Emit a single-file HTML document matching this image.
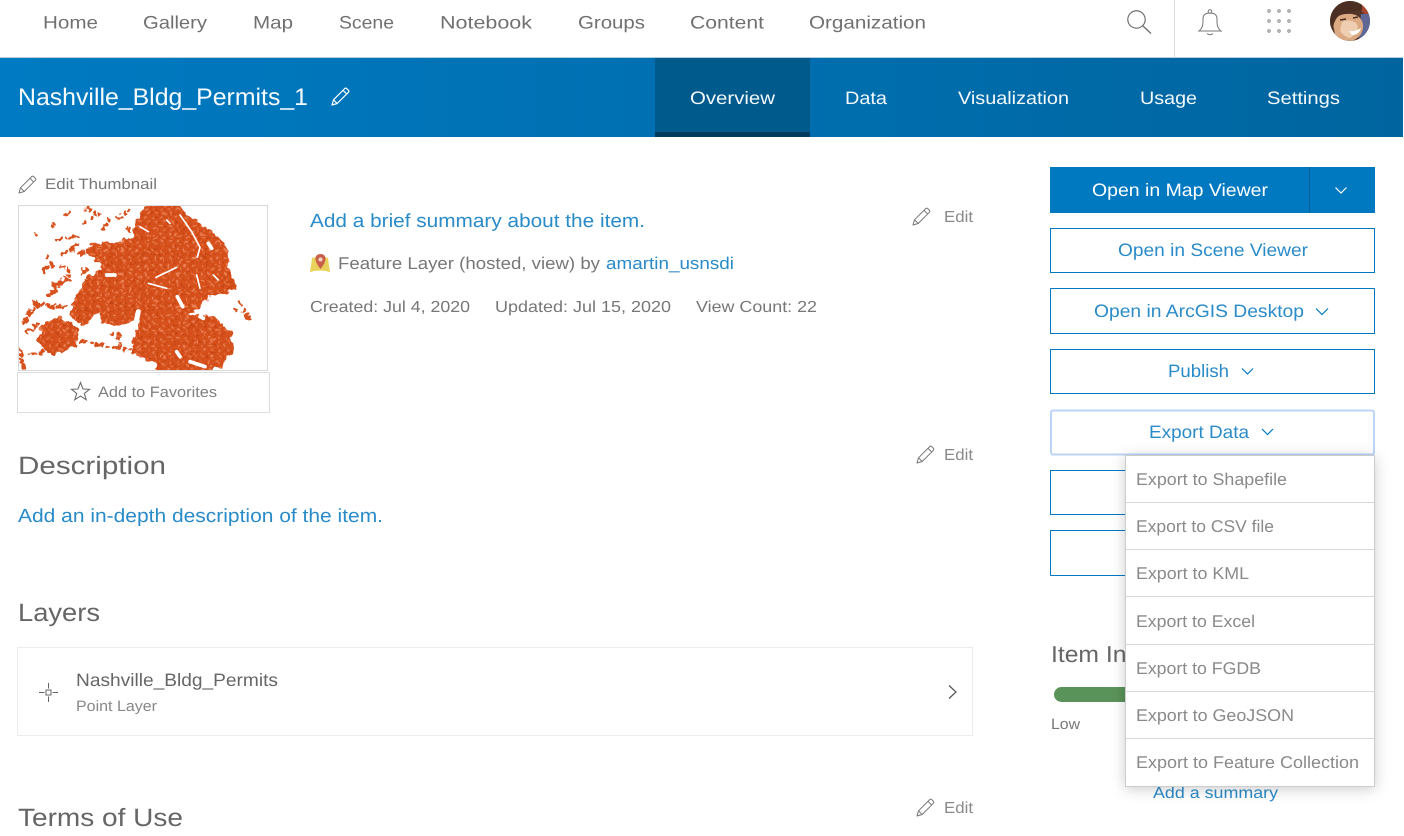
<!DOCTYPE html>
<html><head><meta charset="utf-8"><title>Nashville_Bldg_Permits_1</title>
<style>
html,body{margin:0;padding:0;background:#fff;width:1404px;height:836px;overflow:hidden}
svg{display:block;position:absolute;left:0;top:0}
text{font-family:"Liberation Sans",sans-serif}
.n{fill:#707070;font-size:18px}
.t{fill:#f4f9fc;font-size:18px}
.b{fill:#2a8bc9;font-size:18px}
.g{fill:#777;font-size:16px}
.h{fill:#666;font-size:25px}
.m{fill:#8a8a8a;font-size:17px}
</style></head><body>
<svg width="1404" height="836" viewBox="0 0 1404 836" xmlns="http://www.w3.org/2000/svg" text-rendering="geometricPrecision">
<defs>
<linearGradient id="hd" x1="0" x2="1" y1="0" y2="0"><stop offset="0" stop-color="#007ac2"/><stop offset="1" stop-color="#00659f"/></linearGradient>
<pattern id="tex" width="24" height="24" patternUnits="userSpaceOnUse"><rect width="24" height="24" fill="#d6511f"/><circle cx="5" cy="6" r="3.6" fill="#ea8052"/><circle cx="16" cy="5" r="2.6" fill="#c4420f"/><circle cx="12" cy="16" r="3.4" fill="#e8764a"/><circle cx="21" cy="18" r="2.8" fill="#c4420f"/><circle cx="3" cy="19" r="2.2" fill="#ca4612"/></pattern>
<filter id="rough" x="-5%" y="-5%" width="110%" height="110%"><feTurbulence type="fractalNoise" baseFrequency=".055" numOctaves="2" seed="4" result="n"/><feDisplacementMap in="SourceGraphic" in2="n" scale="26" xChannelSelector="R" yChannelSelector="G"/><feGaussianBlur stdDeviation="1.1"/></filter>
<filter id="sh" x="-20%" y="-20%" width="140%" height="140%"><feDropShadow dx="0" dy="2" stdDeviation="7" flood-color="#000" flood-opacity=".2"/></filter>
<clipPath id="thumb"><rect x="19" y="206" width="248" height="164"/></clipPath>
<clipPath id="av"><circle cx="1350" cy="21" r="20"/></clipPath>
<path id="pen" d="M1 18 L2.500 12.800 L13.800 1.500 Q14.700 .7 15.600 1.500 L17.500 3.400 Q18.200 4.300 17.500 5.200 L6.200 16.500 Z M2.500 12.800 L6.200 16.500 M12 3.300 L15.700 7" fill="none" stroke="#777" stroke-width="1" stroke-linejoin="round"/>
</defs>

<!-- top nav -->
<rect x="0" y="0" width="1404" height="58" fill="#fff"/>
<text class="n" x="43" y="28.500" textLength="55" lengthAdjust="spacingAndGlyphs">Home</text>
<text class="n" x="143" y="28.500" textLength="64" lengthAdjust="spacingAndGlyphs">Gallery</text>
<text class="n" x="253" y="28.500" textLength="40" lengthAdjust="spacingAndGlyphs">Map</text>
<text class="n" x="339" y="28.500" textLength="55" lengthAdjust="spacingAndGlyphs">Scene</text>
<text class="n" x="440" y="28.500" textLength="92" lengthAdjust="spacingAndGlyphs">Notebook</text>
<text class="n" x="578" y="28.500" textLength="67" lengthAdjust="spacingAndGlyphs">Groups</text>
<text class="n" x="690" y="28.500" textLength="74" lengthAdjust="spacingAndGlyphs">Content</text>
<text class="n" x="809" y="28.500" textLength="117" lengthAdjust="spacingAndGlyphs">Organization</text>
<circle cx="1136.500" cy="19.500" r="8.700" fill="none" stroke="#666" stroke-width="1.100"/>
<path d="M1143 26 L1151 33.500" stroke="#666" stroke-width="1.200" fill="none"/>
<rect x="1174" y="0" width="1" height="57" fill="#ddd"/>
<path d="M1199 31 Q1203 28 1203 22 V19 Q1203 13 1210 13 Q1217 13 1217 19 V22 Q1217 28 1221 31 Z" fill="none" stroke="#777" stroke-width="1"/>
<circle cx="1210" cy="11.500" r="1.800" fill="none" stroke="#777" stroke-width="1"/>
<path d="M1207 33.500 Q1210 36 1213 33.500" fill="none" stroke="#777" stroke-width="1"/>
<g fill="none" stroke="#888" stroke-width="1">
<circle cx="1269" cy="11" r="1.200"/><circle cx="1279" cy="11" r="1.200"/><circle cx="1289" cy="11" r="1.200"/>
<circle cx="1269" cy="21" r="1.200"/><circle cx="1279" cy="21" r="1.200"/><circle cx="1289" cy="21" r="1.200"/>
<circle cx="1269" cy="31" r="1.200"/><circle cx="1279" cy="31" r="1.200"/><circle cx="1289" cy="31" r="1.200"/>
</g>
<g clip-path="url(#av)">
<rect x="1330" y="1" width="40" height="40" fill="#54352a"/>
<path d="M1358 1 H1370 V18 L1362 12 Z" fill="#a8452c"/>
<path d="M1361 14 L1370 14 V38 L1359 38 Z" fill="#5f6796"/>
<path d="M1333 24 Q1336 14 1347 14 Q1360 13 1363 24 Q1364 36 1352 41 Q1338 41 1335 34 Z" fill="#dba982"/>
<path d="M1342 22 Q1350 18 1357 24 Q1360 32 1350 38 Q1342 36 1340 30 Z" fill="#efcdb0"/>
<path d="M1330 1 H1362 V10 Q1350 12 1340 15 Q1335 18 1333 27 L1330 27 Z" fill="#4b2f22"/>
<path d="M1349 31 Q1355 32 1361 28 Q1359 35 1352 35 Z" fill="#fff"/>
<path d="M1340 20 L1346 19 M1353 18 L1358 17" stroke="#4c3024" stroke-width="1.600"/>
</g>

<!-- blue bar -->
<rect x="0" y="57" width="1403" height="1.500" fill="#b9cfdd"/>
<rect x="0" y="58" width="1403" height="79" fill="url(#hd)"/>
<rect x="655" y="58" width="155" height="74" fill="#005a8c"/>
<rect x="655" y="132" width="155" height="5" fill="#003a5e"/>
<text x="18" y="105" fill="#f6fafd" font-size="24" textLength="290" lengthAdjust="spacingAndGlyphs">Nashville_Bldg_Permits_1</text>
<g transform="translate(331,87)"><path d="M1 18 L2.500 12.800 L13.800 1.500 Q14.700 .7 15.600 1.500 L17.500 3.400 Q18.200 4.300 17.500 5.200 L6.200 16.500 Z M2.500 12.800 L6.200 16.500 M12 3.300 L15.700 7" fill="none" stroke="#fff" stroke-width="1.200" stroke-linejoin="round"/></g>
<text class="t" x="690" y="104" textLength="85" lengthAdjust="spacingAndGlyphs">Overview</text>
<text class="t" x="845" y="104" textLength="42" lengthAdjust="spacingAndGlyphs">Data</text>
<text class="t" x="958" y="104" textLength="111" lengthAdjust="spacingAndGlyphs">Visualization</text>
<text class="t" x="1140" y="104" textLength="57" lengthAdjust="spacingAndGlyphs">Usage</text>
<text class="t" x="1267" y="104" textLength="73" lengthAdjust="spacingAndGlyphs">Settings</text>

<!-- thumbnail -->
<use href="#pen" transform="translate(18,175)"/>
<text class="g" x="45" y="189" textLength="112" lengthAdjust="spacingAndGlyphs" style="font-size:15px">Edit Thumbnail</text>
<rect x="18.500" y="205.500" width="249" height="165" fill="#fff" stroke="#d9d9d9"/>
<g clip-path="url(#thumb)"><g transform="translate(0,160) scale(.33333)">
<g filter="url(#rough)">
<path d="M395 235 L405 190 L425 155 L445 125 L540 125 L550 160 L600 190 L650 225 L680 260 L685 320 L710 385 L670 405 L625 410 L605 440 L565 465 L640 470 L690 510 L700 575 L665 620 L610 645 L500 645 L460 610 L395 580 L415 480 L370 495 L300 490 L300 455 L250 500 L205 465 L230 405 L260 350 L300 335 L305 320 L270 285 L270 250 L340 245 Z" fill="url(#tex)"/>
<path d="M125 495 L180 468 L240 505 L225 555 L160 590 L110 545 Z" fill="url(#tex)"/>
<g fill="none" stroke="#d6511f" stroke-linecap="round">
<path stroke-width="13" stroke-dasharray="0 12 0 16 0 9" d="M70 490 L110 430 L160 440 L205 440 M80 515 L120 490 M60 570 L70 625 M95 585 L135 575 M130 330 L158 312 M160 395 L205 345 M150 405 L185 360 M240 280 L270 275 M190 282 L235 255 M250 335 L275 325"/>
<path stroke-width="11" stroke-dasharray="0 11 0 19 0 14 0 8" d="M200 165 L215 142 M248 190 L285 165 M260 145 L300 165 M310 205 L335 170 M352 175 L395 150 M380 205 L395 215 M158 200 L165 188 M170 242 L240 225 M108 225 L112 225 M140 295 L155 270 M180 320 L215 330 M160 375 L210 360 M245 545 L335 560 L392 570 M360 525 L358 562 M720 425 L745 475 M705 445 L712 462 M750 475 L755 475 M335 525 L336 525 M100 430 L125 420 M398 542 L399 542"/>
</g>
</g>
<g fill="none" stroke="#fff" stroke-linecap="round">
<path stroke-width="5" d="M468 352 L530 322 M540 165 L575 215 L600 262 L592 292 M445 370 L500 385 M590 345 L600 385 M500 180 L510 190 M420 200 L445 215 M640 345 L655 360"/>
<path stroke-width="11" d="M532 410 L548 440 M530 575 L540 590 M570 605 L615 620 M320 345 L345 345 M625 250 L635 265 M330 210 L345 225 M600 470 L610 475"/>
<path stroke-width="15" d="M415 455 L405 500"/>
</g>
</g></g>
<rect x="17.500" y="372.500" width="252" height="40" fill="#fff" stroke="#ddd"/>
<path d="M80.500 382.500 L83 389 L89.500 389.300 L84.300 393.400 L86.200 399.700 L80.500 396 L74.800 399.700 L76.700 393.400 L71.500 389.300 L78 389 Z" fill="none" stroke="#6e6e6e" stroke-width="1.100"/>
<text class="g" x="98" y="397" textLength="119" lengthAdjust="spacingAndGlyphs" style="font-size:15px;fill:#808080">Add to Favorites</text>

<!-- summary -->
<text class="b" x="310" y="227" textLength="335" lengthAdjust="spacingAndGlyphs" style="font-size:19px">Add a brief summary about the item.</text>
<use href="#pen" transform="translate(912,207)"/>
<text class="g" x="944" y="222" textLength="29" lengthAdjust="spacingAndGlyphs" style="fill:#8a8a8a">Edit</text>
<path d="M312 258 L316 257 L325 257 L328 258 L330 272 Q320 269 310 272 Z" fill="#e8d25a"/>
<path d="M320.500 254 Q325.500 254 325.500 259 Q325.500 263 320.500 269 Q315.500 263 315.500 259 Q315.500 254 320.500 254 Z" fill="#c8604a"/>
<circle cx="320.500" cy="259.500" r="2" fill="#f2d6c8"/>
<text class="g" x="338" y="269" textLength="262" lengthAdjust="spacingAndGlyphs" style="font-size:17px">Feature Layer (hosted, view) by</text>
<text class="b" x="606" y="269" textLength="128" lengthAdjust="spacingAndGlyphs" style="font-size:17px">amartin_usnsdi</text>
<text class="g" x="310" y="312" textLength="160" lengthAdjust="spacingAndGlyphs">Created: Jul 4, 2020</text>
<text class="g" x="495" y="312" textLength="176" lengthAdjust="spacingAndGlyphs">Updated: Jul 15, 2020</text>
<text class="g" x="696" y="312" textLength="121" lengthAdjust="spacingAndGlyphs">View Count: 22</text>

<!-- description -->
<text class="h" x="18" y="474" textLength="148" lengthAdjust="spacingAndGlyphs">Description</text>
<use href="#pen" transform="translate(916,445)"/>
<text class="g" x="944" y="460" textLength="29" lengthAdjust="spacingAndGlyphs" style="fill:#8a8a8a">Edit</text>
<text class="b" x="18" y="522" textLength="365" lengthAdjust="spacingAndGlyphs" style="font-size:19px">Add an in-depth description of the item.</text>

<!-- layers -->
<text class="h" x="18" y="621" textLength="82" lengthAdjust="spacingAndGlyphs">Layers</text>
<rect x="17.500" y="647.500" width="955" height="88" fill="#fff" stroke="#ececec"/>
<path d="M39 692.500 H44.500 M52.500 692.500 H58 M48.500 683 V688.500 M48.500 696.500 V702" stroke="#666" stroke-width="1" fill="none"/>
<rect x="46" y="690" width="5" height="5" fill="none" stroke="#666"/>
<text x="76" y="686" fill="#666" font-size="18" textLength="202" lengthAdjust="spacingAndGlyphs">Nashville_Bldg_Permits</text>
<text x="76" y="711" fill="#888" font-size="15" textLength="81" lengthAdjust="spacingAndGlyphs">Point Layer</text>
<path d="M949 685.500 L956 692 L949 698.500" fill="none" stroke="#555" stroke-width="1.200"/>

<!-- terms -->
<text class="h" x="18" y="826" textLength="165" lengthAdjust="spacingAndGlyphs">Terms of Use</text>
<use href="#pen" transform="translate(916,798)"/>
<text class="g" x="944" y="813" textLength="29" lengthAdjust="spacingAndGlyphs" style="fill:#8a8a8a">Edit</text>

<!-- buttons -->
<rect x="1050" y="167" width="325" height="46" fill="#0079c1"/>
<rect x="1309" y="167" width="1" height="46" fill="#00619b"/>
<text x="1092" y="196" fill="#fff" font-size="18" textLength="176" lengthAdjust="spacingAndGlyphs">Open in Map Viewer</text>
<path d="M1335.500 187.500 L1341 193 L1346.500 187.500" fill="none" stroke="#fff" stroke-width="1.200"/>
<g fill="#fff" stroke="#0079c1">
<rect x="1050.500" y="228.500" width="324" height="44"/>
<rect x="1050.500" y="288.500" width="324" height="45"/>
<rect x="1050.500" y="349.500" width="324" height="44"/>
<rect x="1050.500" y="470.500" width="324" height="44"/>
<rect x="1050.500" y="530.500" width="324" height="45"/>
</g>
<text class="b" x="1118" y="256" textLength="190" lengthAdjust="spacingAndGlyphs">Open in Scene Viewer</text>
<text class="b" x="1094" y="317" textLength="210" lengthAdjust="spacingAndGlyphs">Open in ArcGIS Desktop</text>
<path d="M1316 308.500 L1322 314.500 L1328 308.500" fill="none" stroke="#0079c1" stroke-width="1.200"/>
<text class="b" x="1168" y="377" textLength="61" lengthAdjust="spacingAndGlyphs">Publish</text>
<path d="M1242 368.500 L1247.500 374 L1253 368.500" fill="none" stroke="#0079c1" stroke-width="1.200"/>

<!-- item info -->
<text x="1051" y="662" fill="#666" font-size="23" textLength="96" lengthAdjust="spacingAndGlyphs">Item Info</text>
<rect x="1054" y="687" width="120" height="15" rx="7.500" fill="#5a9359"/>
<text x="1051" y="729" fill="#777" font-size="15" textLength="29" lengthAdjust="spacingAndGlyphs">Low</text>
<text class="b" x="1153" y="798" textLength="125" lengthAdjust="spacingAndGlyphs" style="font-size:16px">Add a summary</text>

<!-- export data focused -->
<rect x="1051" y="410.500" width="323" height="44" rx="2" fill="#fff" stroke="#bcd4f6" stroke-width="2"/>
<text class="b" x="1149" y="438" textLength="100" lengthAdjust="spacingAndGlyphs">Export Data</text>
<path d="M1262 429 L1267.500 434.500 L1273 429" fill="none" stroke="#0079c1" stroke-width="1.200"/>

<!-- menu -->
<rect x="1125.500" y="455.500" width="249" height="331" fill="#fff" stroke="#ccc" filter="url(#sh)"/>
<g fill="#d9d9d9">
<rect x="1126" y="502" width="248" height="1"/><rect x="1126" y="549" width="248" height="1"/><rect x="1126" y="596" width="248" height="1"/><rect x="1126" y="644" width="248" height="1"/><rect x="1126" y="691" width="248" height="1"/><rect x="1126" y="738" width="248" height="1"/>
</g>
<text class="m" x="1136" y="485" textLength="151" lengthAdjust="spacingAndGlyphs">Export to Shapefile</text>
<text class="m" x="1136" y="532" textLength="138" lengthAdjust="spacingAndGlyphs">Export to CSV file</text>
<text class="m" x="1136" y="579" textLength="113" lengthAdjust="spacingAndGlyphs">Export to KML</text>
<text class="m" x="1136" y="627" textLength="119" lengthAdjust="spacingAndGlyphs">Export to Excel</text>
<text class="m" x="1136" y="674" textLength="125" lengthAdjust="spacingAndGlyphs">Export to FGDB</text>
<text class="m" x="1136" y="721" textLength="158" lengthAdjust="spacingAndGlyphs">Export to GeoJSON</text>
<text class="m" x="1136" y="768" textLength="223" lengthAdjust="spacingAndGlyphs">Export to Feature Collection</text>
</svg>
</body></html>
